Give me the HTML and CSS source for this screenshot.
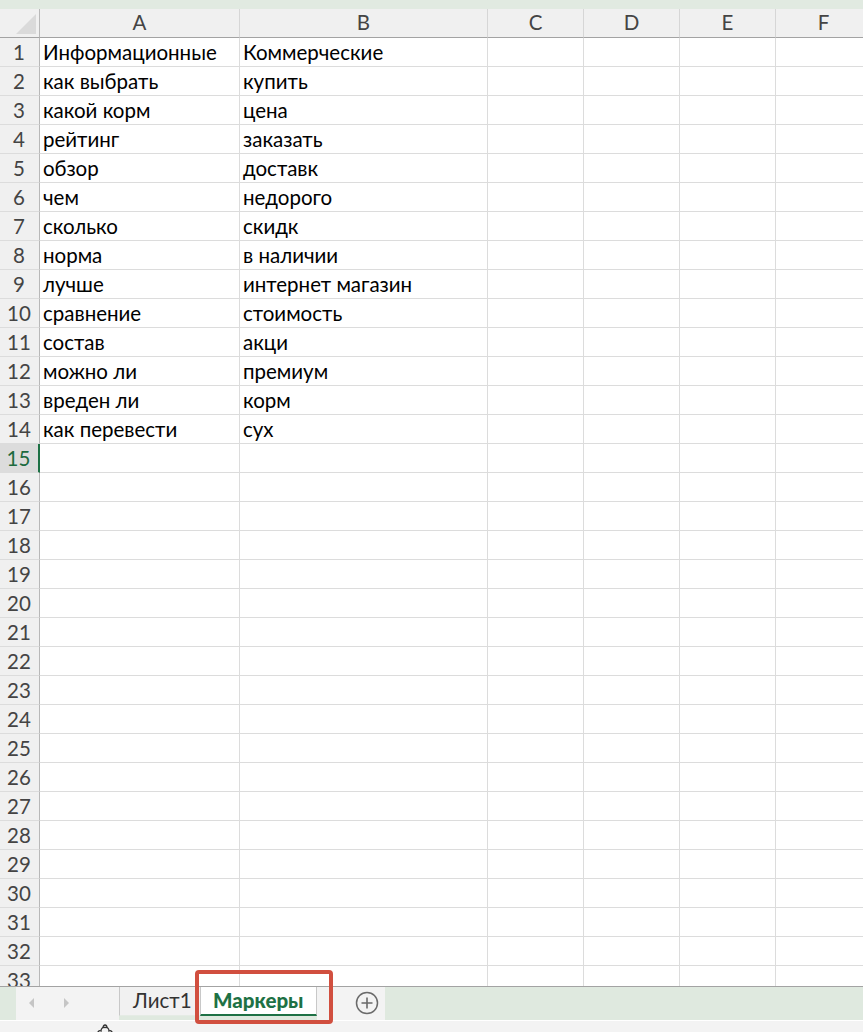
FILE: index.html
```html
<!DOCTYPE html>
<html lang="ru">
<head>
<meta charset="utf-8">
<title>Маркеры</title>
<link rel="stylesheet" href="styles.css">
</head>
<body>
<div class="topstrip"></div>
<div class="sheet-wrap">
  <div class="sheet">
    <div class="hd corner"><span class="tri"></span></div>
    <div class="hd col">A</div>
    <div class="hd col">B</div>
    <div class="hd col">C</div>
    <div class="hd col">D</div>
    <div class="hd col">E</div>
    <div class="hd col">F</div>

    <div class="rh">1</div><div class="c">Информационные</div><div class="c">Коммерческие</div><div class="c"></div><div class="c"></div><div class="c"></div><div class="c"></div>
    <div class="rh">2</div><div class="c">как выбрать</div><div class="c">купить</div><div class="c"></div><div class="c"></div><div class="c"></div><div class="c"></div>
    <div class="rh">3</div><div class="c">какой корм</div><div class="c">цена</div><div class="c"></div><div class="c"></div><div class="c"></div><div class="c"></div>
    <div class="rh">4</div><div class="c">рейтинг</div><div class="c">заказать</div><div class="c"></div><div class="c"></div><div class="c"></div><div class="c"></div>
    <div class="rh">5</div><div class="c">обзор</div><div class="c">доставк</div><div class="c"></div><div class="c"></div><div class="c"></div><div class="c"></div>
    <div class="rh">6</div><div class="c">чем</div><div class="c">недорого</div><div class="c"></div><div class="c"></div><div class="c"></div><div class="c"></div>
    <div class="rh">7</div><div class="c">сколько</div><div class="c">скидк</div><div class="c"></div><div class="c"></div><div class="c"></div><div class="c"></div>
    <div class="rh">8</div><div class="c">норма</div><div class="c">в наличии</div><div class="c"></div><div class="c"></div><div class="c"></div><div class="c"></div>
    <div class="rh">9</div><div class="c">лучше</div><div class="c">интернет магазин</div><div class="c"></div><div class="c"></div><div class="c"></div><div class="c"></div>
    <div class="rh">10</div><div class="c">сравнение</div><div class="c">стоимость</div><div class="c"></div><div class="c"></div><div class="c"></div><div class="c"></div>
    <div class="rh">11</div><div class="c">состав</div><div class="c">акци</div><div class="c"></div><div class="c"></div><div class="c"></div><div class="c"></div>
    <div class="rh">12</div><div class="c">можно ли</div><div class="c">премиум</div><div class="c"></div><div class="c"></div><div class="c"></div><div class="c"></div>
    <div class="rh">13</div><div class="c">вреден ли</div><div class="c">корм</div><div class="c"></div><div class="c"></div><div class="c"></div><div class="c"></div>
    <div class="rh">14</div><div class="c">как перевести</div><div class="c">сух</div><div class="c"></div><div class="c"></div><div class="c"></div><div class="c"></div>
    <div class="rh sel">15</div><div class="c"></div><div class="c"></div><div class="c"></div><div class="c"></div><div class="c"></div><div class="c"></div>
    <div class="rh">16</div><div class="c"></div><div class="c"></div><div class="c"></div><div class="c"></div><div class="c"></div><div class="c"></div>
    <div class="rh">17</div><div class="c"></div><div class="c"></div><div class="c"></div><div class="c"></div><div class="c"></div><div class="c"></div>
    <div class="rh">18</div><div class="c"></div><div class="c"></div><div class="c"></div><div class="c"></div><div class="c"></div><div class="c"></div>
    <div class="rh">19</div><div class="c"></div><div class="c"></div><div class="c"></div><div class="c"></div><div class="c"></div><div class="c"></div>
    <div class="rh">20</div><div class="c"></div><div class="c"></div><div class="c"></div><div class="c"></div><div class="c"></div><div class="c"></div>
    <div class="rh">21</div><div class="c"></div><div class="c"></div><div class="c"></div><div class="c"></div><div class="c"></div><div class="c"></div>
    <div class="rh">22</div><div class="c"></div><div class="c"></div><div class="c"></div><div class="c"></div><div class="c"></div><div class="c"></div>
    <div class="rh">23</div><div class="c"></div><div class="c"></div><div class="c"></div><div class="c"></div><div class="c"></div><div class="c"></div>
    <div class="rh">24</div><div class="c"></div><div class="c"></div><div class="c"></div><div class="c"></div><div class="c"></div><div class="c"></div>
    <div class="rh">25</div><div class="c"></div><div class="c"></div><div class="c"></div><div class="c"></div><div class="c"></div><div class="c"></div>
    <div class="rh">26</div><div class="c"></div><div class="c"></div><div class="c"></div><div class="c"></div><div class="c"></div><div class="c"></div>
    <div class="rh">27</div><div class="c"></div><div class="c"></div><div class="c"></div><div class="c"></div><div class="c"></div><div class="c"></div>
    <div class="rh">28</div><div class="c"></div><div class="c"></div><div class="c"></div><div class="c"></div><div class="c"></div><div class="c"></div>
    <div class="rh">29</div><div class="c"></div><div class="c"></div><div class="c"></div><div class="c"></div><div class="c"></div><div class="c"></div>
    <div class="rh">30</div><div class="c"></div><div class="c"></div><div class="c"></div><div class="c"></div><div class="c"></div><div class="c"></div>
    <div class="rh">31</div><div class="c"></div><div class="c"></div><div class="c"></div><div class="c"></div><div class="c"></div><div class="c"></div>
    <div class="rh">32</div><div class="c"></div><div class="c"></div><div class="c"></div><div class="c"></div><div class="c"></div><div class="c"></div>
    <div class="rh">33</div><div class="c"></div><div class="c"></div><div class="c"></div><div class="c"></div><div class="c"></div><div class="c"></div>
  </div>
</div>

<div class="tabbar">
  <div class="tb-edge"></div>
  <div class="tb-nav">
    <svg class="arrow" width="8" height="12" viewBox="0 0 8 12"><path d="M6 1 L1 6 L6 11 Z" fill="#c5c5c5"/></svg>
    <svg class="arrow" width="8" height="12" viewBox="0 0 8 12"><path d="M2 1 L7 6 L2 11 Z" fill="#c5c5c5"/></svg>
  </div>
  <div class="tab">Лист1</div>
  <div class="tab active">Маркеры</div>
  <div class="tb-add">
    <svg width="24" height="24" viewBox="0 0 24 24"><circle cx="12" cy="12" r="10.5" fill="none" stroke="#6a6a6a" stroke-width="1.5"/><path d="M12 6.5 V17.5 M6.5 12 H17.5" stroke="#6a6a6a" stroke-width="1.6"/></svg>
  </div>
  <div class="tb-fill"></div>
  <div class="highlight"></div>
</div>

<div class="status">
  <svg class="status-icon" width="20" height="12" viewBox="0 0 20 12"><path d="M3 11 C2 8 4 6 6 7 C6 4 8 3 10 3.5 C12 3 14 4 14 7 C16 6 18 8 17 11" fill="none" stroke="#333" stroke-width="1.3"/><path d="M8 4 C8 2 9 1 10 1 C11 1 12 2 12 4" fill="none" stroke="#333" stroke-width="1.3"/></svg>
</div>
</body>
</html>
```
FILE: styles.css
```css
* { box-sizing: border-box; }

html, body {
  margin: 0;
  padding: 0;
  width: 863px;
  height: 1032px;
  overflow: hidden;
  background: #ffffff;
  font-family: "Lato", "Calibri", "Noto Sans", sans-serif;
  color: #000;
}

.topstrip {
  height: 9px;
  background: #e1eae1;
}

.sheet-wrap {
  height: 978px;
  overflow: hidden;
  border-bottom: 1px solid #a3a3a3;
}

.sheet {
  display: grid;
  grid-template-columns: 40px 200px 248px 96px 96px 96px 96px;
  grid-auto-rows: 29px;
  width: 872px;
}

.sheet > div {
  border-right: 1px solid #dcdcdc;
  border-bottom: 1px solid #dcdcdc;
  font-size: 20.5px;
  line-height: 28px;
  white-space: nowrap;
  overflow: hidden;
}

.sheet > .hd {
  background: #f0f0f0;
  border-bottom: 1px solid #a3a3a3;
  border-right: 1px solid #d6d6d6;
  color: #444;
  text-align: center;
  line-height: 27px;
}

.sheet > .corner {
  position: relative;
  border-right: 1px solid #b8b8b8;
}

.tri {
  position: absolute;
  right: 3px;
  bottom: 3px;
  width: 0;
  height: 0;
  border-style: solid;
  border-width: 0 0 20px 20px;
  border-color: transparent transparent #dadada transparent;
}

.sheet > .rh {
  background: #f0f0f0;
  color: #444;
  text-align: center;
  border-right: 1px solid #b8b8b8;
  border-bottom: 1px solid #dcdcdc;
  padding-right: 1px;
}

.sheet > .rh.sel {
  background: #dcdcdc;
  color: #1d6b3f;
  border-right: 2px solid #1e7145;
}

.sheet > .c {
  padding-left: 3px;
  color: #000;
}

/* sheet tab bar */
.tabbar {
  position: relative;
  display: flex;
  height: 33px;
  background: #dfe9df;
}

.tb-edge {
  width: 16px;
  background: #dfe9df;
}

.tb-nav {
  width: 103px;
  background: #f3f3f3;
  display: flex;
  align-items: center;
  padding-left: 12px;
  gap: 26px;
  padding-bottom: 2px;
}

.tab {
  height: 29px;
  background: #f1f1f1;
  border-left: 1px solid #c8c8c8;
  border-bottom: 1px solid #e4ebe4;
  font-size: 20.5px;
  line-height: 27px;
  color: #333;
  padding-left: 13px;
  width: 81px;
}

.tab.active {
  width: 117px;
  background: #ffffff;
  border-left: 1px solid #c8c8c8;
  border-right: 1px solid #c8c8c8;
  border-bottom: 2px solid #1e7145;
  color: #1e7145;
  font-weight: 900;
  padding-left: 12px;
}

.tb-add {
  width: 68px;
  background: #f3f3f3;
  display: flex;
  align-items: center;
  padding-left: 38px;
  padding-bottom: 2px;
}

.tb-fill {
  flex: 1;
  background: #dfe9df;
}

.highlight {
  position: absolute;
  z-index: 5;
  left: 195px;
  top: -17px;
  width: 138px;
  height: 54px;
  border: 4px solid #d14f3f;
  border-radius: 4px;
}

.status {
  height: 12px;
  background: #f3f3f3;
  border-top: 1px solid #ffffff;
  position: relative;
  overflow: hidden;
}

.status-icon {
  display: block;
  margin-left: 95px;
  margin-top: 3px;
}
```
